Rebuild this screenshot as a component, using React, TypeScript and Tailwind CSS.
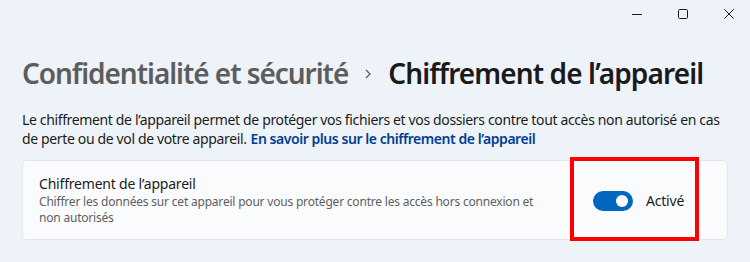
import React from 'react'

const font = { fontFamily: '"Noto Sans", "Open Sans", sans-serif' }

function WindowControls() {
  return (
    <div className="flex justify-end h-[28px] -mr-[2px]">
      <button className="w-[46px] h-[28px] flex items-center justify-center">
        <svg width="10" height="10" viewBox="0 0 10 10">
          <path d="M0 5.5h10" stroke="#1b1b1b" strokeWidth="1" />
        </svg>
      </button>
      <button className="w-[46px] h-[28px] flex items-center justify-center">
        <svg width="10" height="10" viewBox="0 0 10 10">
          <rect x="0.5" y="0.5" width="9" height="9" rx="1.2" fill="none" stroke="#1b1b1b" strokeWidth="1" />
        </svg>
      </button>
      <button className="w-[46px] h-[28px] flex items-center justify-center">
        <svg width="10" height="10" viewBox="0 0 10 10">
          <path d="M0.3 0.3L9.7 9.7M9.7 0.3L0.3 9.7" stroke="#1b1b1b" strokeWidth="1" />
        </svg>
      </button>
    </div>
  )
}

export default function App() {
  return (
    <div className="w-[750px] h-[262px] bg-[#eef3f9] overflow-hidden" style={font}>
      <WindowControls />

      {/* fil d'Ariane */}
      <div className="flex items-center px-[22px] mt-[25px] h-[40px] whitespace-nowrap">
        <span className="text-[28px] font-semibold text-[#5d5d5d] tracking-[-1.05px]">Confidentialité et sécurité</span>
        <svg className="mx-[16px] mt-[2px]" width="8" height="10" viewBox="0 0 8 10">
          <path d="M2 1l4 4-4 4" fill="none" stroke="#5d5d5d" strokeWidth="1.3" />
        </svg>
        <span className="text-[28px] font-semibold text-[#1a1a1a] tracking-[-0.9px]">Chiffrement de l’appareil</span>
      </div>

      {/* description */}
      <div className="mx-[22px] mt-[17px] text-[14px] leading-[19px] text-[#1b1b1b] tracking-[-0.36px] whitespace-nowrap">
        <div>
          Le chiffrement de l’appareil permet de protéger vos fichiers et vos dossiers contre tout accès non autorisé en cas
        </div>
        <div className="flex gap-[4px]">
          <span>de perte ou de vol de votre appareil.</span>
          <span className="font-semibold text-[#003e92] tracking-[-0.45px]">En savoir plus sur le chiffrement de l’appareil</span>
        </div>
      </div>

      {/* carte */}
      <div className="mx-[22px] mt-[12px] h-[80px] bg-[#fafbfd] border border-[#e3e6ea] rounded-[4px] flex items-center pl-[16px] pr-[16px]">
        <div className="flex-1">
          <div className="text-[14px] leading-[20px] text-[#1b1b1b] tracking-[-0.2px]">Chiffrement de l’appareil</div>
          <div className="text-[12px] leading-[16px] text-[#5f5f5f] max-w-[500px] tracking-[-0.2px]">
            Chiffrer les données sur cet appareil pour vous protéger contre les accès hors connexion et non autorisés
          </div>
        </div>
        <div className="relative flex items-center gap-[13px] w-[118px] h-full">
          <div className="w-[40px] h-[20px] rounded-full bg-[#0067c0] flex items-center justify-end pr-[5px] mt-[2px]">
            <div className="w-[12px] h-[12px] rounded-full bg-white" />
          </div>
          <span className="text-[14px] text-[#1b1b1b] tracking-[-0.2px]">Activé</span>
          <div className="absolute left-[-23px] top-[-4px] w-[129px] h-[84px] border-[4px] border-[#ff0000]" />
        </div>
      </div>
    </div>
  )
}
